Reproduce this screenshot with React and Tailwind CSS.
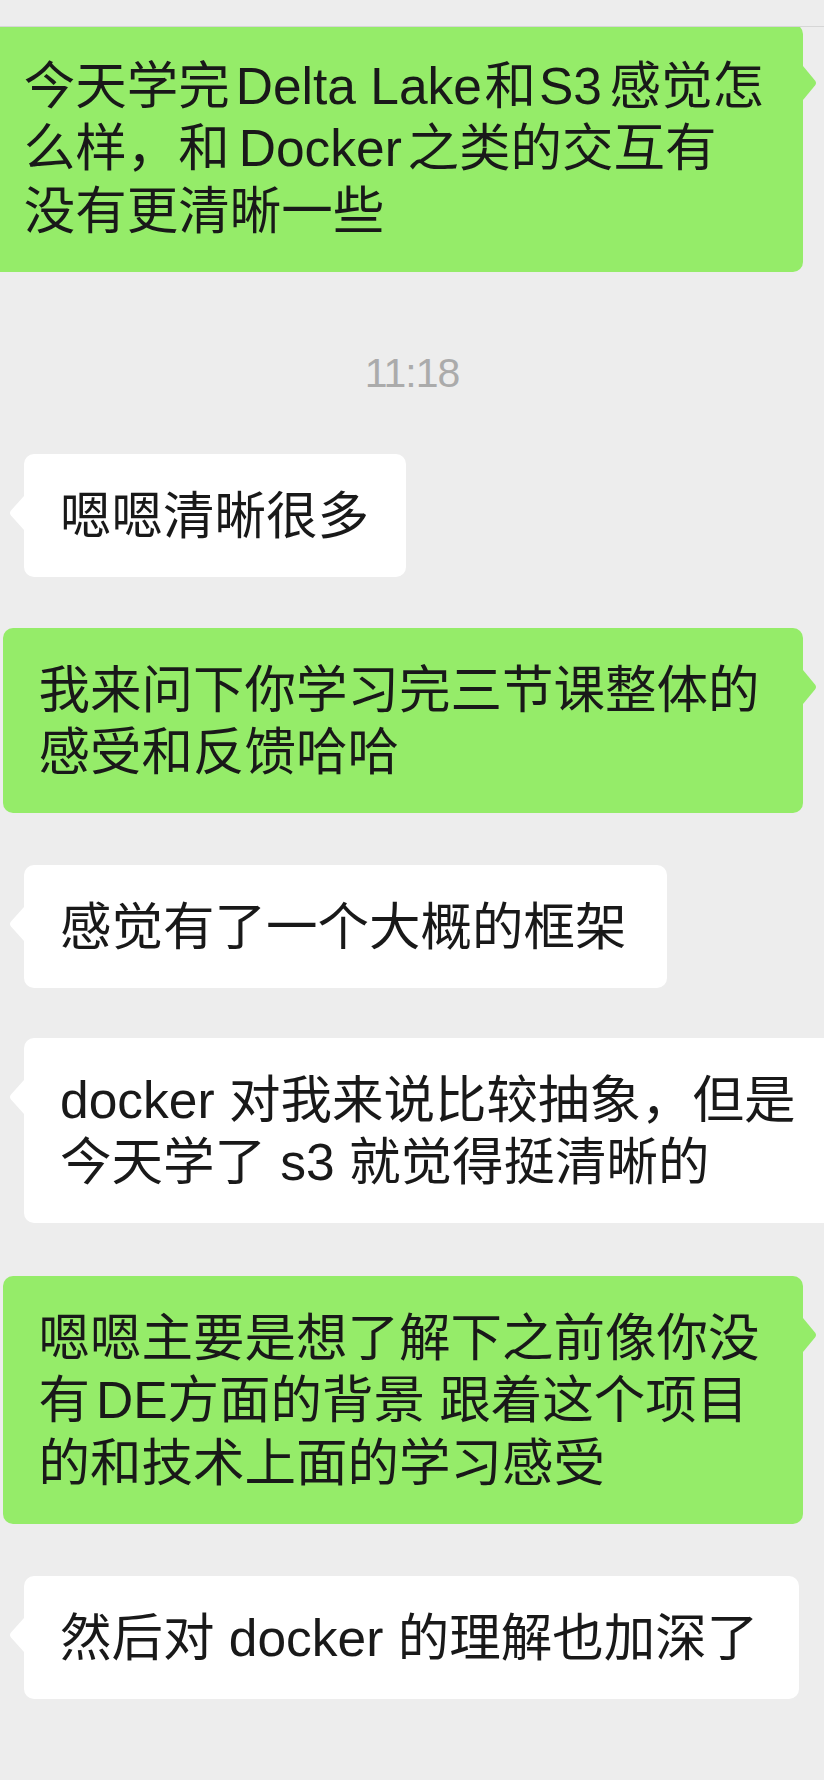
import React from "react";

function TailRight() {
  return (
    <svg
      className="absolute right-[-15px] top-[41px]"
      width="16"
      height="36"
      viewBox="0 0 16 36"
    >
      <path d="M0 0 L1 1 L13 15.5 Q15 18 13 20.5 L1 35 L0 36 Z" fill="#95ec69" />
    </svg>
  );
}

function TailLeft() {
  return (
    <svg
      className="absolute left-[-16px] top-[41px]"
      width="17"
      height="36"
      viewBox="0 0 17 36"
    >
      <path d="M17 0 L16 1 L3 15.5 Q1 18 3 20.5 L16 35 L17 36 Z" fill="#ffffff" />
    </svg>
  );
}

function GreenBubble({ className, children }) {
  return (
    <div
      className={
        "relative shrink-0 rounded-[10px] bg-[#95ec69] whitespace-nowrap text-[51.5px] leading-[62.5px] text-[#191919] pt-[30.5px] pb-[29.5px] " +
        className
      }
    >
      <TailRight />
      {children}
    </div>
  );
}

function WhiteBubble({ className, children }) {
  return (
    <div
      className={
        "relative shrink-0 rounded-[10px] bg-white whitespace-nowrap text-[51.5px] leading-[62.5px] text-[#191919] pt-[30.5px] pb-[29.5px] " +
        className
      }
    >
      <TailLeft />
      {children}
    </div>
  );
}

export default function App() {
  return (
    <div className="w-[824px] h-[1780px] overflow-hidden bg-[#ededed] font-['Liberation_Sans','Noto_Sans_CJK_SC',sans-serif]">
      <div className="relative z-10 h-[27px] bg-[#ededed] border-b border-[#d6d6d6]" />
      <div className="flex flex-col mt-[-3px]">
        {/* B1 */}
        <div className="flex justify-end pr-[21px]">
          <GreenBubble className="pl-[36px] pr-[39px]">
            <div>
              今天学完<span className="ml-[6px] mr-[2.5px]">Delta Lake</span>和
              <span className="ml-[3px] mr-[7.5px]">S3</span>感觉怎
            </div>
            <div>
              么样，和<span className="ml-[9px] mr-[5.5px]">Docker</span>之类的交互有
            </div>
            <div>没有更清晰一些</div>
          </GreenBubble>
        </div>

        {/* Timestamp */}
        <div className="mt-[81px] h-[41px] text-center text-[41px] leading-[41px] tracking-[-1px] text-[#ababab]">
          11:18
        </div>

        {/* B3 */}
        <div className="flex pl-[24px] mt-[60.5px]">
          <WhiteBubble className="w-[382px] pl-[36px]">
            <div>嗯嗯清晰很多</div>
          </WhiteBubble>
        </div>

        {/* B4 */}
        <div className="flex justify-end pr-[21px] mt-[51.5px]">
          <GreenBubble className="w-[800px] pl-[35.5px]">
            <div>我来问下你学习完三节课整体的</div>
            <div>感受和反馈哈哈</div>
          </GreenBubble>
        </div>

        {/* B5 */}
        <div className="flex pl-[24px] mt-[52px]">
          <WhiteBubble className="w-[643px] pl-[36px]">
            <div>感觉有了一个大概的框架</div>
          </WhiteBubble>
        </div>

        {/* B6 */}
        <div className="flex pl-[24px] mt-[50.5px]">
          <WhiteBubble className="pl-[36px] pr-[40px]">
            <div>docker 对我来说比较抽象，但是</div>
            <div>今天学了 s3 就觉得挺清晰的</div>
          </WhiteBubble>
        </div>

        {/* B7 */}
        <div className="flex justify-end pr-[21px] mt-[53px]">
          <GreenBubble className="w-[800px] pl-[35.5px]">
            <div>嗯嗯主要是想了解下之前像你没</div>
            <div>
              有<span className="ml-[6px]">DE</span>方面的背景 跟着这个项目
            </div>
            <div>的和技术上面的学习感受</div>
          </GreenBubble>
        </div>

        {/* B8 */}
        <div className="flex pl-[24px] mt-[52.5px]">
          <WhiteBubble className="w-[775px] pl-[36px]">
            <div>然后对 docker 的理解也加深了</div>
          </WhiteBubble>
        </div>
      </div>
    </div>
  );
}
